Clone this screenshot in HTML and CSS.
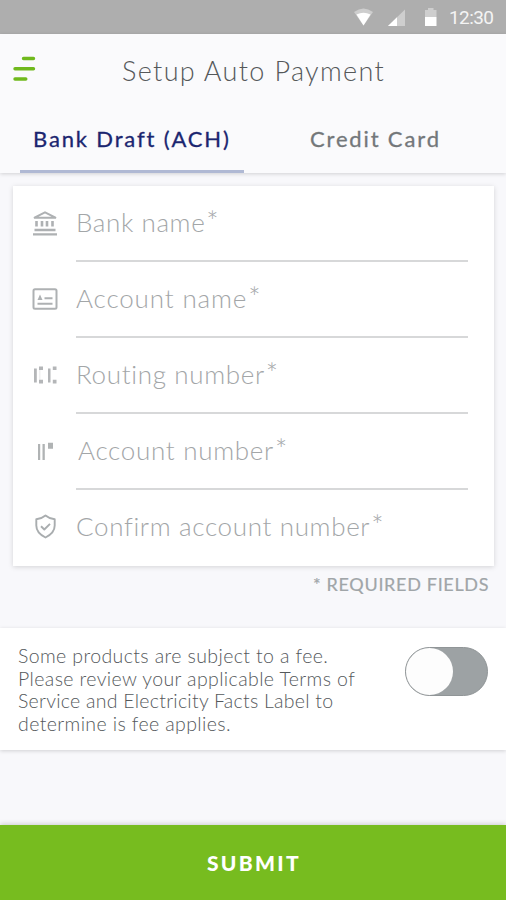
FILE: index.html
```html
<!DOCTYPE html>
<html lang="en">
<head>
<meta charset="utf-8">
<title>Setup Auto Payment</title>
<link rel="stylesheet" href="styles.css">
</head>
<body>
<div class="screen">
  <div class="status">
    <svg class="status-icons" width="84" height="36" viewBox="0 0 84 36">
      <path d="M0 12Q9.500 5 19 12L9.500 25.500Z" fill="#cecece"/>
      <path d="M2.500 14.500Q9.500 11 16.500 14.500L9.500 25.500Z" fill="#fff"/>
      <path d="M34 26L51 9.500V26Z" fill="#cecece"/>
      <path d="M34 26L43 17.300V26Z" fill="#fff"/>
      <path d="M71 17V10H74V8H79.500V10H82.500V17Z" fill="#cecece"/>
      <path d="M71 17H82.500V26H71Z" fill="#fff"/>
    </svg>
    <span class="clock">12:30</span>
  </div>
  <header class="header">
    <div class="title-row">
      <svg class="menu" width="24" height="26" viewBox="0 0 24 26" stroke="#70b91d" stroke-width="3.400" stroke-linecap="round">
        <path d="M11.500 2.500H21.500M3 12.800H21.500M3 23H13.800"/>
      </svg>
      <h1 class="title">Setup Auto Payment</h1>
    </div>
    <nav class="tabs">
      <div class="tab tab-active">Bank Draft (ACH)</div>
      <div class="tab">Credit Card</div>
    </nav>
  </header>
  <main>
    <section class="card">
      <div class="row">
        <svg class="icon" width="28" height="28" viewBox="0 0 28 28" fill="none" stroke="#aeb1b3">
          <path d="M3 8.800L14 3.300L25 8.800Z" stroke-width="2"/>
          <path d="M5.500 12V17.500M11 12V17.500M16 12V17.500M21.500 12V17.500" stroke-width="2.600"/>
          <path d="M3.500 21H24.500M2 25.300H26" stroke-width="2.300"/>
        </svg>
        <div class="field bank">Bank name<span class="star">*</span></div>
      </div>
      <div class="row">
        <svg class="icon" width="28" height="28" viewBox="0 0 28 28" fill="none" stroke="#aeb1b3">
          <rect x="2.500" y="4.300" width="23" height="19.500" rx="1.500" stroke-width="2"/>
          <path d="M6.500 15L9 9.500L11.500 15Z" fill="#aeb1b3" stroke="none"/>
          <path d="M13.500 13.200H21.500M6.500 18.800H21.500" stroke-width="2"/>
        </svg>
        <div class="field holder">Account name<span class="star">*</span></div>
      </div>
      <div class="row">
        <svg class="icon" width="28" height="28" viewBox="0 0 28 28" fill="#b4b6b8">
          <path d="M3 7.500H5.800V21.500H3ZM17 7.500H19.500V21.500H17Z"/>
          <path d="M8 5.500H12V9H8ZM8 18.800H12V22.500H8ZM21.800 5.500H25.500V9H21.800ZM21.800 18.800H25.500V22.500H21.800Z"/>
          <path d="M8 9H9.500V18.800H8Z" opacity=".2"/>
        </svg>
        <div class="field routing">Routing number<span class="star">*</span></div>
      </div>
      <div class="row">
        <svg class="icon" width="28" height="28" viewBox="0 0 28 28" fill="#b0b3b4">
          <path d="M7 7H9.200V23H7ZM11.500 7H13.800V23H11.500ZM17 5.800H22V11.800H17Z"/>
        </svg>
        <div class="field number">Account number<span class="star">*</span></div>
      </div>
      <div class="row">
        <svg class="icon" width="28" height="28" viewBox="0 0 28 28" fill="none" stroke="#a9adaf" stroke-width="1.900" stroke-linejoin="round">
          <path d="M14.500 2.500Q18.500 5.800 23.700 6.300V12.500C23.700 18.500 19.500 22 14.500 24.500C9.500 22 5.300 18.500 5.300 12.500V6.300Q10.500 5.800 14.500 2.500Z"/>
          <path d="M10 13.300L13.300 16.500L19 10.800"/>
        </svg>
        <div class="field confirm">Confirm account number<span class="star">*</span></div>
      </div>
    </section>
    <p class="required">* REQUIRED FIELDS</p>
    <section class="fee">
      <p class="fee-text">Some products are subject to a fee.<br>Please review your applicable Terms of<br><span class="tight">Service and Electricity Facts Label to</span><br>determine is fee applies.</p>
      <div class="toggle"><div class="knob"></div></div>
    </section>
  </main>
  <div class="submit">SUBMIT</div>
</div>
</body>
</html>
```
FILE: styles.css
```css
* { box-sizing: border-box; }
body { margin: 0; font-family: Lato, "Liberation Sans", sans-serif; }
h1, p { margin: 0; }
svg { display: block; flex: none; }
.screen {
  width: 506px;
  height: 900px;
  display: flex;
  flex-direction: column;
  background: #f8f8fb;
  overflow: hidden;
}
.status {
  height: 34px;
  flex: none;
  display: flex;
  background: #aeaeae;
  padding-left: 354px;
}
.clock {
  font: 400 19px/35px Roboto, sans-serif;
  color: #f4f4f4;
  margin-left: 11px;
  letter-spacing: -0.6px;
}
.header {
  height: 139px;
  flex: none;
  background: #fafafc;
  box-shadow: 0 1px 4px rgba(0, 0, 0, .16);
}
.title-row { height: 71px; display: flex; padding-left: 12px; }
.menu { margin-top: 22px; }
.title {
  margin-left: 86px;
  font-size: 27px;
  font-weight: 300;
  line-height: 74px;
  letter-spacing: 1.35px;
  color: #55585a;
  white-space: nowrap;
}
.tabs { height: 68px; display: flex; padding-left: 20px; }
.tab {
  width: 224px;
  height: 68px;
  padding-left: 13px;
  font-size: 22px;
  font-weight: 400;
  line-height: 68px;
  letter-spacing: 1.85px;
  color: #73777a;
  -webkit-text-stroke: .3px currentColor;
  white-space: nowrap;
}
.tab + .tab { padding-left: 66px; }
.tab-active { color: #1b2670; border-bottom: 3px solid #b0b9d4; }
.card {
  width: 481px;
  height: 380px;
  margin: 13px 0 0 13px;
  background: #fff;
  box-shadow: 0 1px 5px rgba(0, 0, 0, .15);
}
.row { height: 76px; display: flex; padding-left: 18px; }
.icon { margin-top: 23px; }
.field {
  width: 392px;
  height: 76px;
  margin-left: 17px;
  border-bottom: 2px solid #d7d8d9;
  font-size: 26px;
  font-weight: 300;
  line-height: 73px;
  color: #a3a6a8;
  white-space: nowrap;
}
.star { font-size: 29px; line-height: 0; margin-left: 1px; letter-spacing: 0; }
.bank { letter-spacing: .6px; line-height: 72px; }
.holder { letter-spacing: .85px; }
.routing { letter-spacing: .65px; }
.number { letter-spacing: .7px; text-indent: 2px; }
.confirm { letter-spacing: .65px; }
.row:last-child .field { border-bottom: 0; }
.required {
  height: 62px;
  padding-left: 313px;
  font-size: 18px;
  line-height: 37px;
  letter-spacing: .68px;
  color: #a0a5a8;
  -webkit-text-stroke: .2px currentColor;
  white-space: nowrap;
}
.fee {
  height: 122px;
  display: flex;
  padding: 17px 0 0 18px;
  background: #fff;
  box-shadow: 0 1px 4px rgba(0, 0, 0, .16);
}
.fee-text {
  width: 387px;
  font-size: 19.500px;
  font-weight: 300;
  line-height: 22.700px;
  letter-spacing: .39px;
  color: #55595c;
  white-space: nowrap;
}
.tight { letter-spacing: .26px; }
.toggle {
  width: 83px;
  height: 49px;
  margin-top: 2px;
  border: 1px solid #909597;
  border-radius: 25px;
  background: #9da2a4;
}
.knob { width: 47px; height: 47px; border-radius: 50%; background: #fdfdfd; }
.submit {
  height: 75px;
  flex: none;
  margin-top: auto;
  padding-left: 207px;
  background: #77bc1f;
  box-shadow: 0 -1px 5px rgba(0, 0, 0, .18);
  font-size: 21px;
  font-weight: 900;
  line-height: 75px;
  letter-spacing: 2.3px;
  color: #fff;
}
```
